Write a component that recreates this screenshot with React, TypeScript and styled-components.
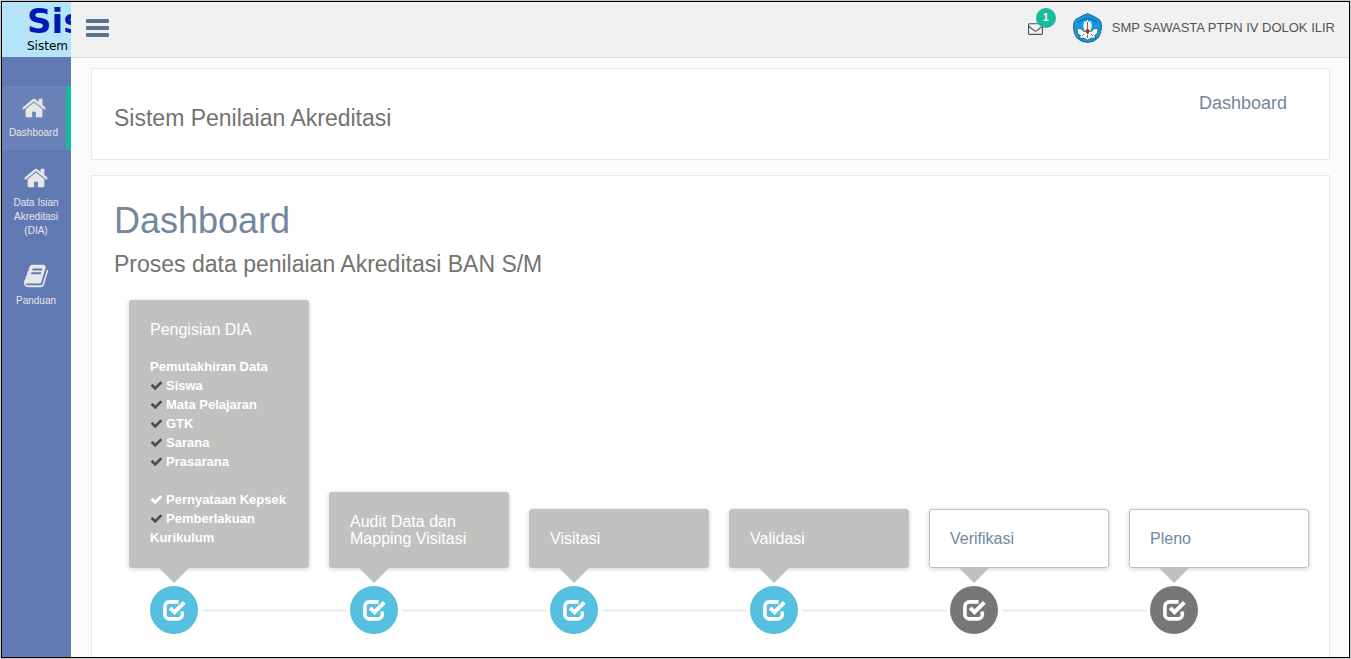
import React from "react";
import styled, { createGlobalStyle } from "styled-components";

const Global = createGlobalStyle`
  * { box-sizing: border-box; }
  body {
    margin: 0;
    font-family: "Liberation Sans", Arial, sans-serif;
    color: #73879c;
    background: #c8c8c8;
  }
  h1, h2, h3, p, ul { margin: 0; padding: 0; }
  h1, h2, h3 { font-weight: 400; }
  ul { list-style: none; }
  button { border: 0; padding: 0; background: none; cursor: pointer; font: inherit; }
  a { color: inherit; text-decoration: none; }
`;

const Frame = styled.div`
  display: flex;
  min-height: 100vh;
  border: 1px solid #c8c8c8;
  outline: 1px solid #000;
  outline-offset: -2px;
  padding: 1px;
  background: #fbfbfb;
`;

const Sidebar = styled.aside`
  flex: 0 0 69px;
  width: 69px;
  background: #6179b2;
`;

const Brand = styled.a`
  display: block;
  height: 55px;
  padding-left: 25px;
  overflow: hidden;
  background: #b6e4f8;
  color: #000;
  font-family: "DejaVu Sans", Verdana, sans-serif;
`;

const BrandName = styled.strong`
  display: block;
  color: #0019b4;
  font-size: 34px;
  line-height: 36px;
  margin-top: 1px;
`;

const BrandNote = styled.span`
  display: block;
  font-size: 12px;
  line-height: 14px;
`;

const Menu = styled.nav`
  display: flex;
  flex-direction: column;
  margin-top: 29px;
`;

const MenuLink = styled.a<{ $active?: boolean }>`
  display: flex;
  flex-direction: column;
  align-items: center;
  padding: ${(p) => (p.$active ? "9px 1px 10px 0" : "15px 1px 10px 0")};
  border-right: ${(p) => (p.$active ? "5px solid #1abb9c" : "0")};
  background: ${(p) => (p.$active ? "#6b82b8" : "transparent")};
  color: #e7e7e7;
  font-size: 10px;
  line-height: 14px;
  text-align: center;

  svg { width: 26px; height: 26px; margin-bottom: 5px; }
`;

const Main = styled.div`
  flex: 1;
  min-width: 0;
  display: flex;
  flex-direction: column;
`;

const TopBar = styled.header`
  display: flex;
  align-items: center;
  height: 56px;
  padding: 0 14px 3px 15px;
  background: #f1f1f1;
  border-bottom: 1px solid #d9dee4;
`;

const MenuToggle = styled.button`
  display: flex;
  margin-right: auto;
  color: #5a738e;
`;

const MailButton = styled.button`
  position: relative;
  display: flex;
  margin-right: 30px;
  color: #515356;
`;

const Badge = styled.span`
  position: absolute;
  left: 8px;
  bottom: 8px;
  width: 20px;
  height: 20px;
  border-radius: 10px;
  background: #1abb9c;
  color: #fff;
  font-size: 10px;
  font-weight: 700;
  line-height: 20px;
  text-align: center;
`;

const Account = styled.button`
  display: flex;
  align-items: center;
  gap: 10px;
  color: #515356;
  font-size: 13px;
  line-height: 20px;
  white-space: nowrap;
`;

const Content = styled.main`
  flex: 1;
  display: flex;
  flex-direction: column;
  gap: 15px;
  padding: 10px 19px 0 20px;
`;

const TitlePanel = styled.section`
  display: flex;
  justify-content: space-between;
  align-items: flex-start;
  min-height: 92px;
  padding: 22px 42px 22px 22px;
  background: #fff;
  border: 1px solid #e6e9ed;
`;

const SubHeading = styled.h2`
  color: #73736f;
  font-size: 23px;
  line-height: 28px;
`;

const PageName = styled(SubHeading)`
  padding-top: 13px;
`;

const Crumb = styled.a`
  font-size: 18px;
  line-height: 24px;
`;

const Panel = styled.section`
  flex: 1;
  padding: 25px 20px 23px 22px;
  background: #fff;
  border: 1px solid #e6e9ed;
  border-bottom: 0;
`;

const Heading = styled.h1`
  font-size: 36px;
  line-height: 40px;
  margin-bottom: 9px;
`;

const Timeline = styled.ol`
  display: grid;
  grid-template-columns: repeat(6, minmax(0, 1fr));
  column-gap: 20px;
  margin: 22px 0 0 15px;
  padding: 0;
  list-style: none;
`;

const Step = styled.li`
  display: flex;
  flex-direction: column;
  justify-content: flex-end;
`;

const StepCard = styled.div<{ $pending?: boolean }>`
  padding: 20px;
  border: 1px solid ${(p) => (p.$pending ? "#c0c0c0" : "#c1c1bf")};
  border-radius: 3px;
  background: ${(p) => (p.$pending ? "#fff" : "#c1c1bf")};
  color: ${(p) => (p.$pending ? "#73879c" : "#fff")};
  box-shadow: 0 1px 5px rgba(0, 0, 0, 0.18);
`;

const StepTitle = styled.h3`
  font-size: 16px;
  line-height: 17px;
`;

const Tasks = styled.div`
  margin-top: 19px;
  font-size: 13px;
  font-weight: 700;
  line-height: 19px;

  ul + ul { margin-top: 19px; }
`;

const Task = styled.li<{ $open?: boolean }>`
  svg {
    width: 13px;
    height: 13px;
    margin-right: 3px;
    vertical-align: -2px;
    color: ${(p) => (p.$open ? "#fff" : "#4a4d52")};
  }
`;

const Pointer = styled.div`
  width: 0;
  margin-left: 30px;
  border: 15px solid transparent;
  border-top-color: #c0c0c0;
  border-bottom: 0;
`;

const Track = styled.div`
  display: flex;
  align-items: center;
  gap: 4px;
  margin: 3px -17px 0 21px;
`;

const Dot = styled.span<{ $pending?: boolean }>`
  display: flex;
  flex: 0 0 48px;
  height: 48px;
  align-items: center;
  justify-content: center;
  border-radius: 50%;
  background: ${(p) => (p.$pending ? "#777" : "#56c0e0")};
  color: #fff;
`;

const Line = styled.span`
  flex: 1;
  height: 3px;
  margin-right: -20px;
  background: #f1f1f1;
`;

const HomeIcon = () => (
  <svg viewBox="0 0 1792 1792" fill="currentColor" aria-hidden="true">
    <path d="M1472 992v480q0 26-19 45t-45 19h-384v-384h-256v384h-384q-26 0-45-19t-19-45v-480q0-1 .5-3t.5-3l575-474 575 474q1 2 1 6zm223-69l-62 74q-8 9-21 11h-3q-13 0-21-7l-692-577-692 577q-12 8-24 7-13-2-21-11l-62-74q-8-10-7-23.5t11-21.5l719-599q32-26 76-26t76 26l244 204v-195q0-14 9-23t23-9h192q14 0 23 9t9 23v408l219 182q10 8 11 21.5t-7 23.5z" />
  </svg>
);

const BookIcon = () => (
  <svg viewBox="0 0 1792 1792" fill="currentColor" aria-hidden="true">
    <path d="M1703 478q40 57 18 129l-275 906q-19 64-76.5 107.5t-122.5 43.5h-923q-77 0-148.5-53.5t-99.5-131.5q-24-67-2-127 0-4 3-27t4-37q1-8-3-21.5t-3-19.5q2-11 8-21t16.5-23.5 16.5-23.5q23-38 45-91.5t30-91.5q3-10 .5-30t-.5-28q3-11 17-28t17-23q21-36 42-92t25-90q1-9-2.5-32t.5-28q4-13 22-30.5t22-22.5q19-26 42.5-84.5t27.5-96.5q1-8-3-25.5t-2-26.5q2-8 9-18t18-23 17-21q8-12 16.5-30.5t15-35 16-36 19.5-32 26.5-23.5 36-11.5 47.5 5.5l-1 3q38-9 51-9h761q74 0 114 56t18 130l-274 906q-36 119-71.5 153.5t-128.5 34.5h-869q-27 0-38 15-11 16-1 43 24 70 144 70h923q29 0 56-15.5t35-41.5l300-987q7-22 5-57 38 15 59 43zm-1064 2q-4 13 2 22.5t20 9.5h608q13 0 25.5-9.5t16.5-22.5l21-64q4-13-2-22.5t-20-9.5h-608q-13 0-25.5 9.5t-16.5 22.5zm-83 256q-4 13 2 22.5t20 9.5h608q13 0 25.5-9.5t16.5-22.5l21-64q4-13-2-22.5t-20-9.5h-608q-13 0-25.5 9.5t-16.5 22.5z" />
  </svg>
);

const TickIcon = () => (
  <svg viewBox="0 0 1792 1792" fill="currentColor" aria-hidden="true">
    <path d="M1671 566q0 40-28 68l-724 724-136 136q-28 28-68 28t-68-28l-136-136-362-362q-28-28-28-68t28-68l136-136q28-28 68-28t68 28l294 295 656-657q28-28 68-28t68 28l136 136q28 28 28 68z" />
  </svg>
);

const MailIcon = () => (
  <svg width="15" height="15" viewBox="0 0 1792 1792" fill="currentColor" aria-hidden="true">
    <path d="M1664 1504v-768q-32 36-69 66-268 206-426 338-51 43-83 67t-86.5 48.5-102.5 24.5h-2q-48 0-102.5-24.5t-86.5-48.5-83-67q-158-132-426-338-37-30-69-66v768q0 13 9.5 22.5t22.5 9.5h1472q13 0 22.5-9.5t9.5-22.5zm0-1051v-24.5l-.5-13-3-12.5-5.5-9-9-7.5-14-2.5h-1472q-13 0-22.5 9.5t-9.5 22.5q0 168 147 284 193 152 401 317 6 5 35 29.5t46 37.5 44.5 31.5 50.5 27.5 43 9h2q20 0 43-9t50.5-27.5 44.5-31.5 46-37.5 35-29.5q208-165 401-317 54-43 100.5-115.5t46.5-131.5zm128-37v1088q0 66-47 113t-113 47h-1472q-66 0-113-47t-47-113v-1088q0-66 47-113t113-47h1472q66 0 113 47t47 113z" />
  </svg>
);

const BarsIcon = () => (
  <svg width="23" height="20" viewBox="0 0 23 20" fill="currentColor" aria-hidden="true">
    <rect y="1" width="23" height="4" rx="1" />
    <rect y="8" width="23" height="4" rx="1" />
    <rect y="15" width="23" height="4" rx="1" />
  </svg>
);

const CheckedBoxIcon = () => (
  <svg width="24" height="24" viewBox="0 0 24 24" fill="none" stroke="currentColor" aria-hidden="true">
    <path d="M16.500 3.900H7.400A4.500 4.500 0 0 0 2.900 8.400V16.400a4.500 4.500 0 0 0 4.500 4.500h8.400a4.500 4.500 0 0 0 4.500-4.500V13.500" strokeWidth="3.600" />
    <path d="M8.200 9.800l4.300 4.300L22.300 4.400" strokeWidth="4" />
  </svg>
);

const SchoolCrest = () => (
  <svg width="29" height="30" viewBox="0 0 29 30" aria-hidden="true">
    <path d="M14.500.6Q20 2.500 26.400 6.600Q28.800 9 28.500 14.500Q28.200 20.500 25.500 24.500Q21 29.400 14.500 29.400Q8 29.400 3.500 24.500Q.8 20.500.5 14.500Q.2 9 2.600 6.600Q9 2.500 14.500.6Z" fill="#0f9be8" stroke="#1b4c70" strokeWidth=".8" />
    <path d="M5 9.500Q14.500 1.500 24 9.500" fill="none" stroke="#1c5c86" strokeWidth="1.600" strokeDasharray="1.500 .7" />
    <path d="M14.500 6.500l1.400 2.500 2-1 1 5-1.400 5h-6l-1.400-5 1-5 2 1z" fill="#f4f1e6" />
    <path d="M3.800 15.500l4.200.3 3 3 3.500-2 3.500 2 3-3 4.200-.3-1 5-2.500 2 .5 3-3.500-.5-4.200 2-4.200-2-3.500.5.5-3-2.500-2z" fill="#fff" stroke="#24343f" strokeWidth=".6" />
    <path d="M14.500 15.500l1.800 2.700-1.800 3-1.800-3z" fill="#d02a2a" stroke="#321" strokeWidth=".5" />
    <path d="M14.500 9v6M9 23l2-2M20 23l-2-2M14.500 22v3" stroke="#333" strokeWidth=".7" />
  </svg>
);

const updates = ["Siswa", "Mata Pelajaran", "GTK", "Sarana", "Prasarana"];

const steps = [
  { title: "Pengisian DIA", detailed: true },
  { title: "Audit Data dan Mapping Visitasi" },
  { title: "Visitasi" },
  { title: "Validasi" },
  { title: "Verifikasi", pending: true },
  { title: "Pleno", pending: true },
];

export default function App() {
  return (
    <Frame>
      <Global />
      <Sidebar>
        <Brand href="#">
          <BrandName>Sis</BrandName>
          <BrandNote>Sistem</BrandNote>
        </Brand>
        <Menu>
          <MenuLink href="#dashboard" $active>
            <HomeIcon />
            Dashboard
          </MenuLink>
          <MenuLink href="#dia">
            <HomeIcon />
            Data Isian Akreditasi (DIA)
          </MenuLink>
          <MenuLink href="#panduan">
            <BookIcon />
            Panduan
          </MenuLink>
        </Menu>
      </Sidebar>
      <Main>
        <TopBar>
          <MenuToggle aria-label="Menu">
            <BarsIcon />
          </MenuToggle>
          <MailButton>
            <MailIcon />
            <Badge>1</Badge>
          </MailButton>
          <Account>
            <SchoolCrest />
            SMP SAWASTA PTPN IV DOLOK ILIR
          </Account>
        </TopBar>
        <Content>
          <TitlePanel>
            <PageName>Sistem Penilaian Akreditasi</PageName>
            <Crumb href="#dashboard">Dashboard</Crumb>
          </TitlePanel>
          <Panel>
            <Heading>Dashboard</Heading>
            <SubHeading>Proses data penilaian Akreditasi BAN S/M</SubHeading>
            <Timeline>
              {steps.map((step, i) => (
                <Step key={step.title}>
                  <StepCard $pending={step.pending}>
                    <StepTitle>{step.title}</StepTitle>
                    {step.detailed && (
                      <Tasks>
                        Pemutakhiran Data
                        <ul>
                          {updates.map((name) => (
                            <Task key={name}>
                              <TickIcon />
                              {name}
                            </Task>
                          ))}
                        </ul>
                        <ul>
                          <Task $open>
                            <TickIcon />
                            Pernyataan Kepsek
                          </Task>
                          <Task>
                            <TickIcon />
                            Pemberlakuan Kurikulum
                          </Task>
                        </ul>
                      </Tasks>
                    )}
                  </StepCard>
                  <Pointer />
                  <Track>
                    <Dot $pending={step.pending}>
                      <CheckedBoxIcon />
                    </Dot>
                    {i < steps.length - 1 && <Line />}
                  </Track>
                </Step>
              ))}
            </Timeline>
          </Panel>
        </Content>
      </Main>
    </Frame>
  );
}
